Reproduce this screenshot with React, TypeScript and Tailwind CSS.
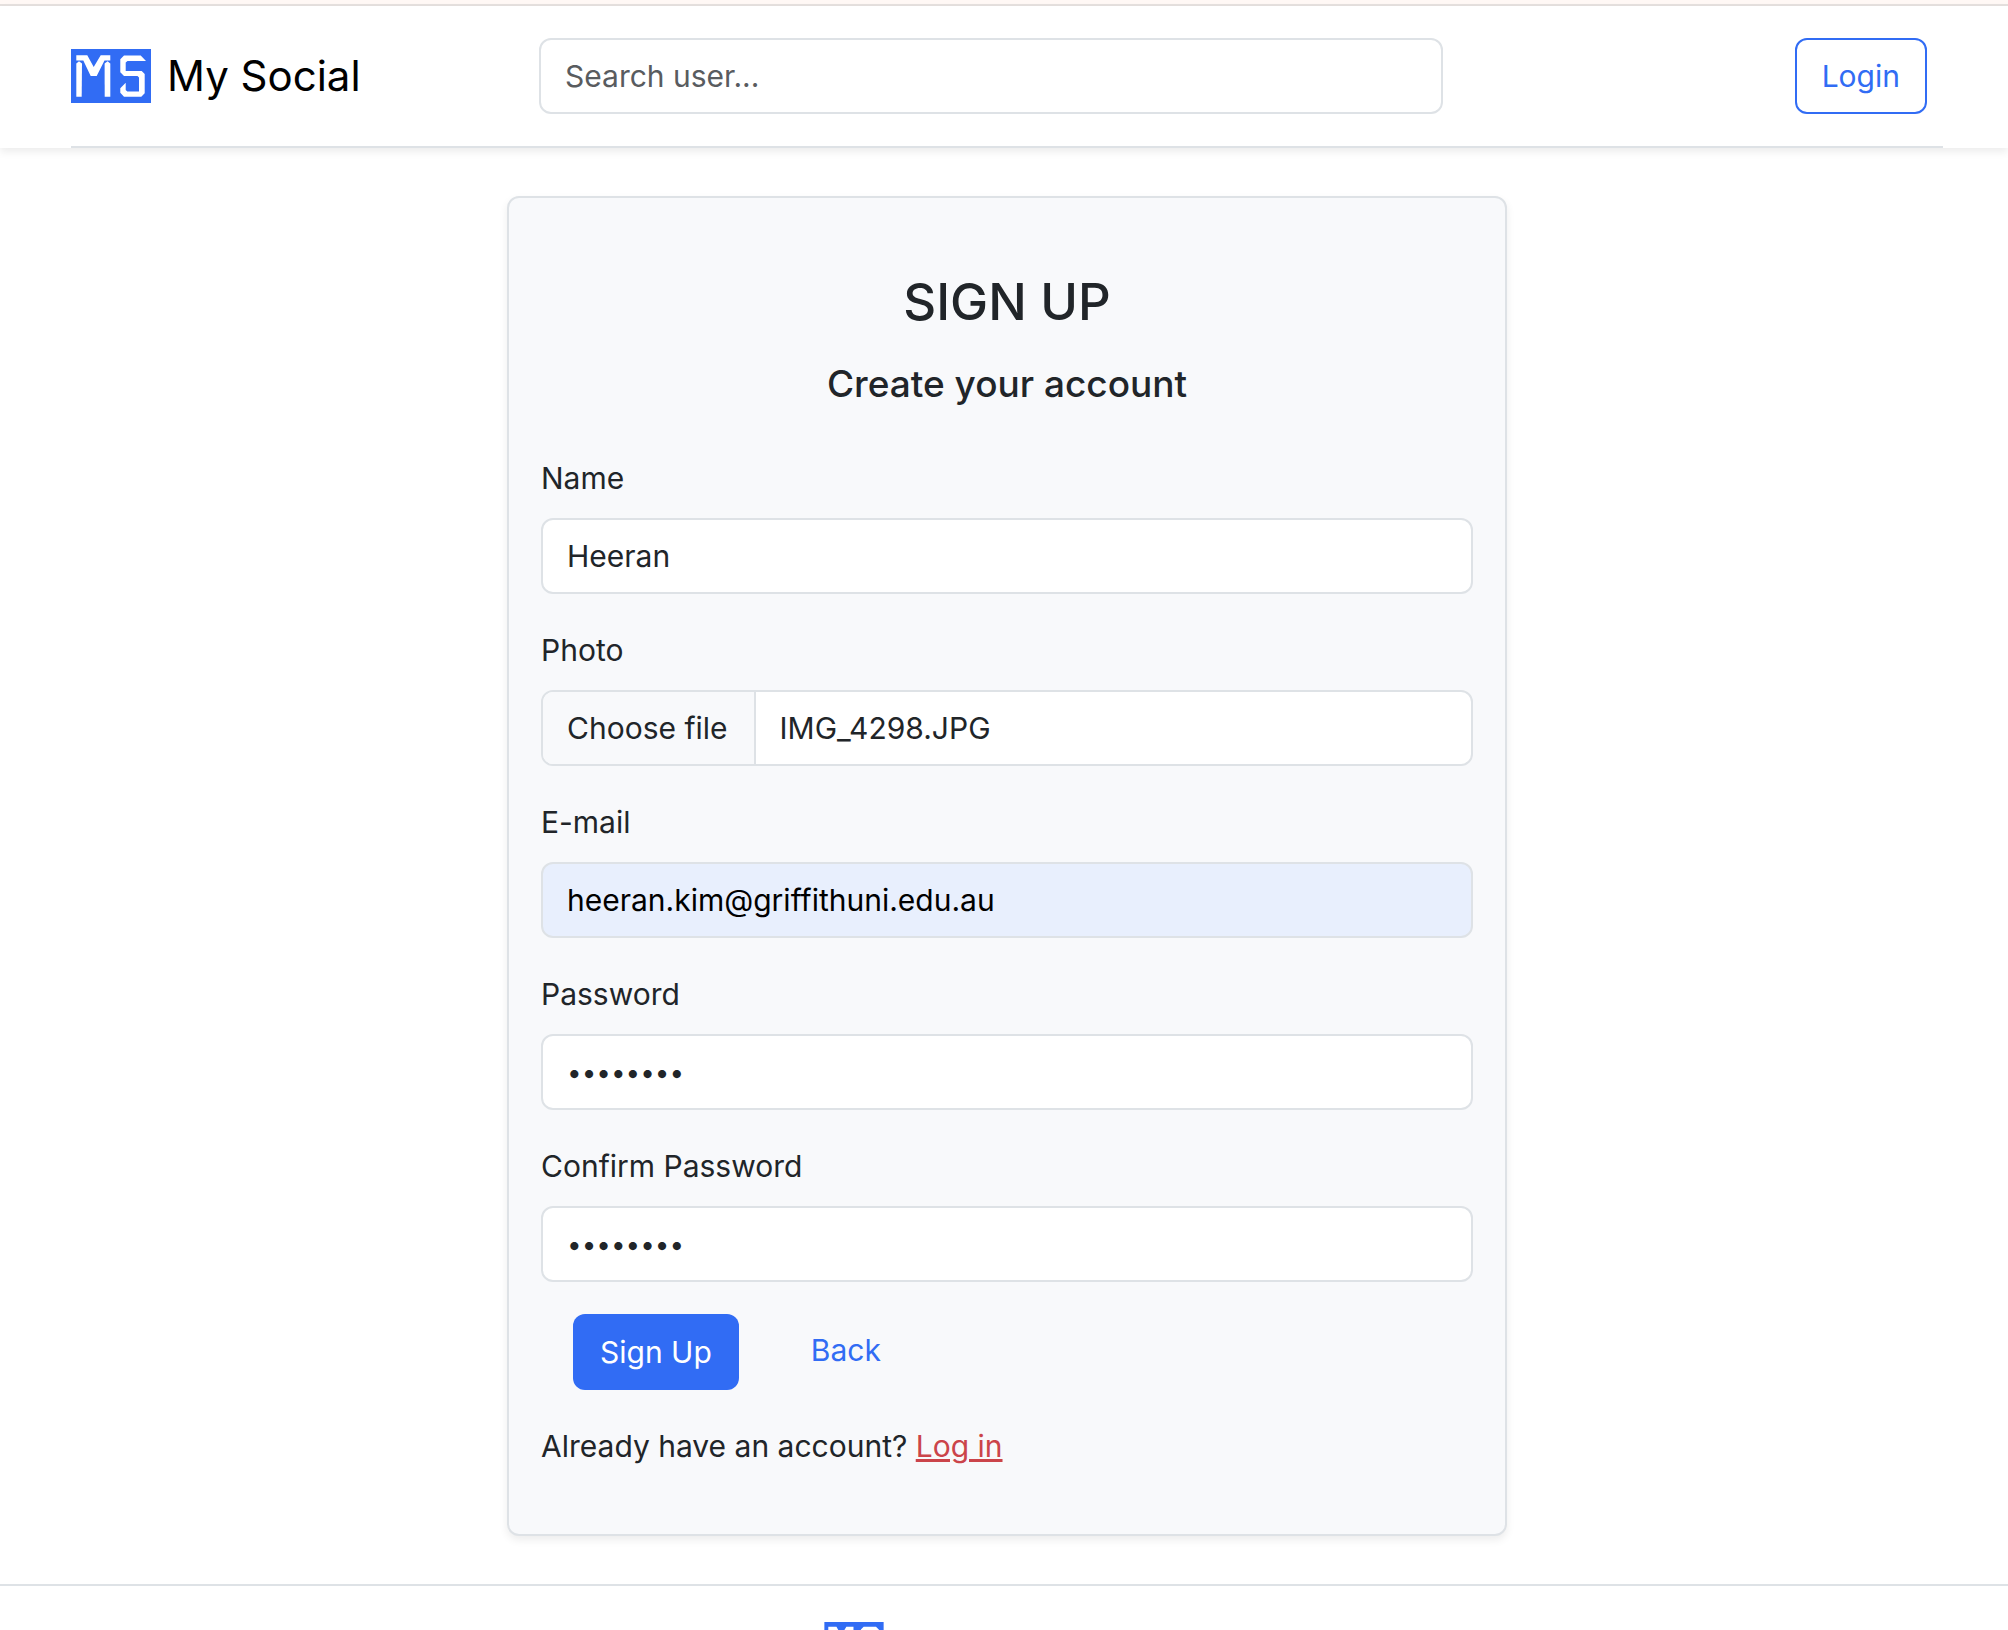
import { useState } from "react";
import type { InputHTMLAttributes } from "react";

const controlClass =
  "block h-[76px] w-full rounded-xl border-2 border-[#dee2e6] bg-white px-6 text-[30px] text-[#212529] placeholder:text-[#595c5f] placeholder:opacity-100 outline-none focus:border-[#86b7fe]";

function Logo({ className }: { className: string }) {
  return (
    <svg viewBox="0 0 80 54" className={className} role="img" aria-label="MS">
      <rect width="80" height="54" fill="#316cf4" />
      <g fill="#fff">
        <path d="M5.3 6.3H16.3L22.7 18L29.7 6.3H39.3V11.5H33.5L25.7 27H19.7L12.3 11.5H5.3Z" />
        <path d="M5.3 14.5L8 12.2L11 14.5L10.7 47.7H5.3Z" />
        <path d="M39.3 14.5L36.6 12.2L33.6 14.5L33.7 47.7H39.3Z" />
        <path d="M53 6.5H69.7L75 11.9H56.5L54.7 13.5V22H70.7L73.7 25V44.2L70.3 47.7H53L49.3 43.7V39.3L54.7 33.7V41L56.3 42.5H68V28.5L66.5 27H53L49.3 23.3V10.2Z" />
      </g>
    </svg>
  );
}

type FieldProps = InputHTMLAttributes<HTMLInputElement> & { id: string; label: string };

function Field({ id, label, className, ...rest }: FieldProps) {
  return (
    <div>
      <label htmlFor={id} className="mb-4 block leading-[48px]">
        {label}
      </label>
      <input id={id} name={id} className={`${controlClass} ${className ?? ""}`} {...rest} />
    </div>
  );
}

function FileField() {
  const [fileName, setFileName] = useState("IMG_4298.JPG");
  return (
    <div>
      <label htmlFor="photo" className="mb-4 block leading-[48px]">
        Photo
      </label>
      <label
        htmlFor="photo"
        className="relative flex h-[76px] cursor-pointer items-stretch overflow-hidden rounded-xl border-2 border-[#dee2e6] bg-white leading-[72px]"
      >
        <span className="border-r-2 border-[#dee2e6] bg-[#f8f9fb] pr-[26px] pl-6">Choose file</span>
        <span className="px-6">{fileName}</span>
        <input
          id="photo"
          name="photo"
          type="file"
          accept="image/*"
          className="sr-only"
          onChange={(e) => setFileName(e.target.files?.[0]?.name ?? "")}
        />
      </label>
    </div>
  );
}

export default function App() {
  return (
    <div className="bg-white font-[Inter,sans-serif] text-[30px] text-[#212529]">
      <div className="h-[6px] border-b-2 border-[#e5e0de] bg-[#fff8f5]" />

      <header className="bg-white pr-[65px] pl-[71px] shadow-[0_4px_8px_rgba(0,0,0,0.075)]">
        <div className="grid grid-cols-4 items-center border-b-2 border-[#dee2e6] py-8">
          <a href="#home" className="flex items-center gap-4 text-[42px] leading-[54px] text-black">
            <Logo className="h-[54px] w-20 shrink-0" />
            <span>My Social</span>
          </a>
          <form role="search" className="col-span-2 pr-8" onSubmit={(e) => e.preventDefault()}>
            <input type="search" aria-label="Search user" placeholder="Search user..." className={controlClass} />
          </form>
          <div className="flex justify-end pr-4">
            <button
              type="button"
              className="h-[76px] cursor-pointer rounded-xl border-2 border-[#316cf4] px-[25px] text-[#316cf4]"
            >
              Login
            </button>
          </div>
        </div>
      </header>

      <main className="py-12 pl-[6px]">
        <section className="mx-auto max-w-[1000px] rounded-xl border-2 border-[#dee2e6] bg-[#f8f9fb] px-8 pt-[70px] pb-16 shadow-[0_4px_8px_rgba(0,0,0,0.075)]">
          <h1 className="mb-6 text-center text-[51px] leading-[68px] font-medium">SIGN UP</h1>
          <h2 className="mb-[46px] text-center text-[37px] leading-[48px] font-medium">Create your account</h2>

          <form className="flex flex-col gap-8" onSubmit={(e) => e.preventDefault()}>
            <Field id="name" label="Name" type="text" defaultValue="Heeran" />
            <FileField />
            <Field
              id="email"
              label="E-mail"
              type="email"
              defaultValue="heeran.kim@griffithuni.edu.au"
              className="bg-[#e8effd]! text-black!"
            />
            <Field id="password" label="Password" type="password" defaultValue="password" className="text-[26px]!" />
            <Field
              id="confirm"
              label="Confirm Password"
              type="password"
              defaultValue="password"
              className="text-[26px]!"
            />
            <div className="flex items-start pl-8">
              <button type="submit" className="h-[76px] cursor-pointer rounded-xl bg-[#316cf4] px-[27px] text-white">
                Sign Up
              </button>
              <a href="#back" className="mt-3 ml-[72px] leading-[48px] text-[#316cf4]">
                Back
              </a>
            </div>
          </form>

          <p className="mt-8 leading-[48px]">
            Already have an account?{" "}
            <a href="#login" className="text-[#cb444a] underline">
              Log in
            </a>
          </p>
        </section>
      </main>

      <footer className="border-t-2 border-[#dee2e6] pt-9">
        <div className="mx-auto max-w-[360px]">
          <Logo className="h-10 w-[60px]" />
        </div>
      </footer>
    </div>
  );
}
